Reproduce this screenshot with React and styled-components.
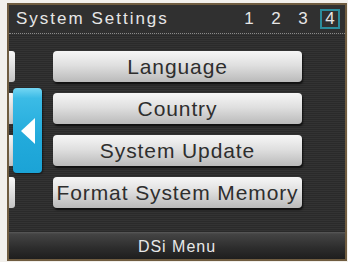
import React from "react";
import styled, { createGlobalStyle } from "styled-components";

const Global = createGlobalStyle`
  body {
    margin: 0;
    background: #f2f0ec;
    font-family: "Liberation Sans", Arial, sans-serif;
  }
`;

const Screen = styled.div`
  margin: 3px 0 0 7px;
  width: 340px;
  height: 258px;
  box-sizing: border-box;
  border: 2px solid #6f5c40;
  display: flex;
  flex-direction: column;
  background: #2e2e2e;
`;

const Header = styled.div`
  height: 29px;
  box-sizing: border-box;
  display: flex;
  align-items: center;
  padding: 0 5px 1px 7px;
  background: #303030;
  border-bottom: 1px dotted #8a8a8a;
  color: #e6e6e6;
  font-size: 17px;
  letter-spacing: 2px;
`;

const Title = styled.div`
  flex: 1;
`;

const Pages = styled.div`
  display: flex;
  align-items: center;
  gap: 7px;
`;

const Page = styled.div`
  width: 20px;
  height: 20px;
  display: flex;
  align-items: center;
  justify-content: center;
  box-sizing: border-box;
  letter-spacing: 0;
  border: 2px solid ${(p) => (p.$active ? "#2b8c9c" : "transparent")};
`;

const Body = styled.div`
  position: relative;
  flex: 1;
  display: flex;
  gap: 38px;
  padding-top: 17px;
  background: repeating-linear-gradient(
    to bottom,
    #333333 0px,
    #333333 1px,
    #2a2a2a 1px,
    #2a2a2a 2px
  );
`;

const Tabs = styled.div`
  display: flex;
  flex-direction: column;
  gap: 11px;
`;

const SideTab = styled.div`
  width: 6px;
  height: 31px;
  border-radius: 0 3px 3px 0;
  background: linear-gradient(to bottom, #f8f8f8, #c4c4c4);
`;

const BlueTab = styled.div`
  position: absolute;
  left: 4px;
  top: 54px;
  width: 29px;
  height: 85px;
  border-radius: 4px;
  background: linear-gradient(to bottom, #74d6f3 0%, #3bbbe6 12%, #22aadb 60%, #1ba3d6 100%);
  box-shadow: 1px 1px 2px rgba(0, 0, 0, 0.5);
  display: flex;
  align-items: center;
  justify-content: center;
`;

const Buttons = styled.div`
  display: flex;
  flex-direction: column;
  gap: 11px;
`;

const Button = styled.div`
  width: 249px;
  height: 31px;
  box-sizing: border-box;
  border-radius: 4px;
  background: linear-gradient(to bottom, #f6f6f6 0%, #e0e0e0 45%, #bababa 100%);
  box-shadow: 1px 2px 2px rgba(0, 0, 0, 0.7);
  display: flex;
  align-items: center;
  justify-content: center;
  padding-top: 1px;
  color: #2e2e2e;
  font-size: 21px;
  letter-spacing: 0.9px;
  white-space: nowrap;
`;

const Footer = styled.div`
  height: 27px;
  box-sizing: border-box;
  padding-top: 3px;
  display: flex;
  align-items: center;
  justify-content: center;
  background: linear-gradient(to bottom, #5a5a5a 0px, #444 2px, #2c2c2c 60%, #1e1e1e 100%);
  color: #e8e8e8;
  font-size: 16px;
  letter-spacing: 1px;
`;

const items = ["Language", "Country", "System Update", "Format System Memory"];

export default function App() {
  return (
    <>
      <Global />
      <Screen>
        <Header>
          <Title>System Settings</Title>
          <Pages>
            <Page>1</Page>
            <Page>2</Page>
            <Page>3</Page>
            <Page $active>4</Page>
          </Pages>
        </Header>
        <Body>
          <Tabs>
            {items.map((t) => (
              <SideTab key={t} />
            ))}
          </Tabs>
          <BlueTab>
            <svg width="16" height="26" viewBox="0 0 16 26">
              <polygon points="15,0 15,26 1,13" fill="#ffffff" />
            </svg>
          </BlueTab>
          <Buttons>
            {items.map((t) => (
              <Button key={t}>{t}</Button>
            ))}
          </Buttons>
        </Body>
        <Footer>DSi Menu</Footer>
      </Screen>
    </>
  );
}
